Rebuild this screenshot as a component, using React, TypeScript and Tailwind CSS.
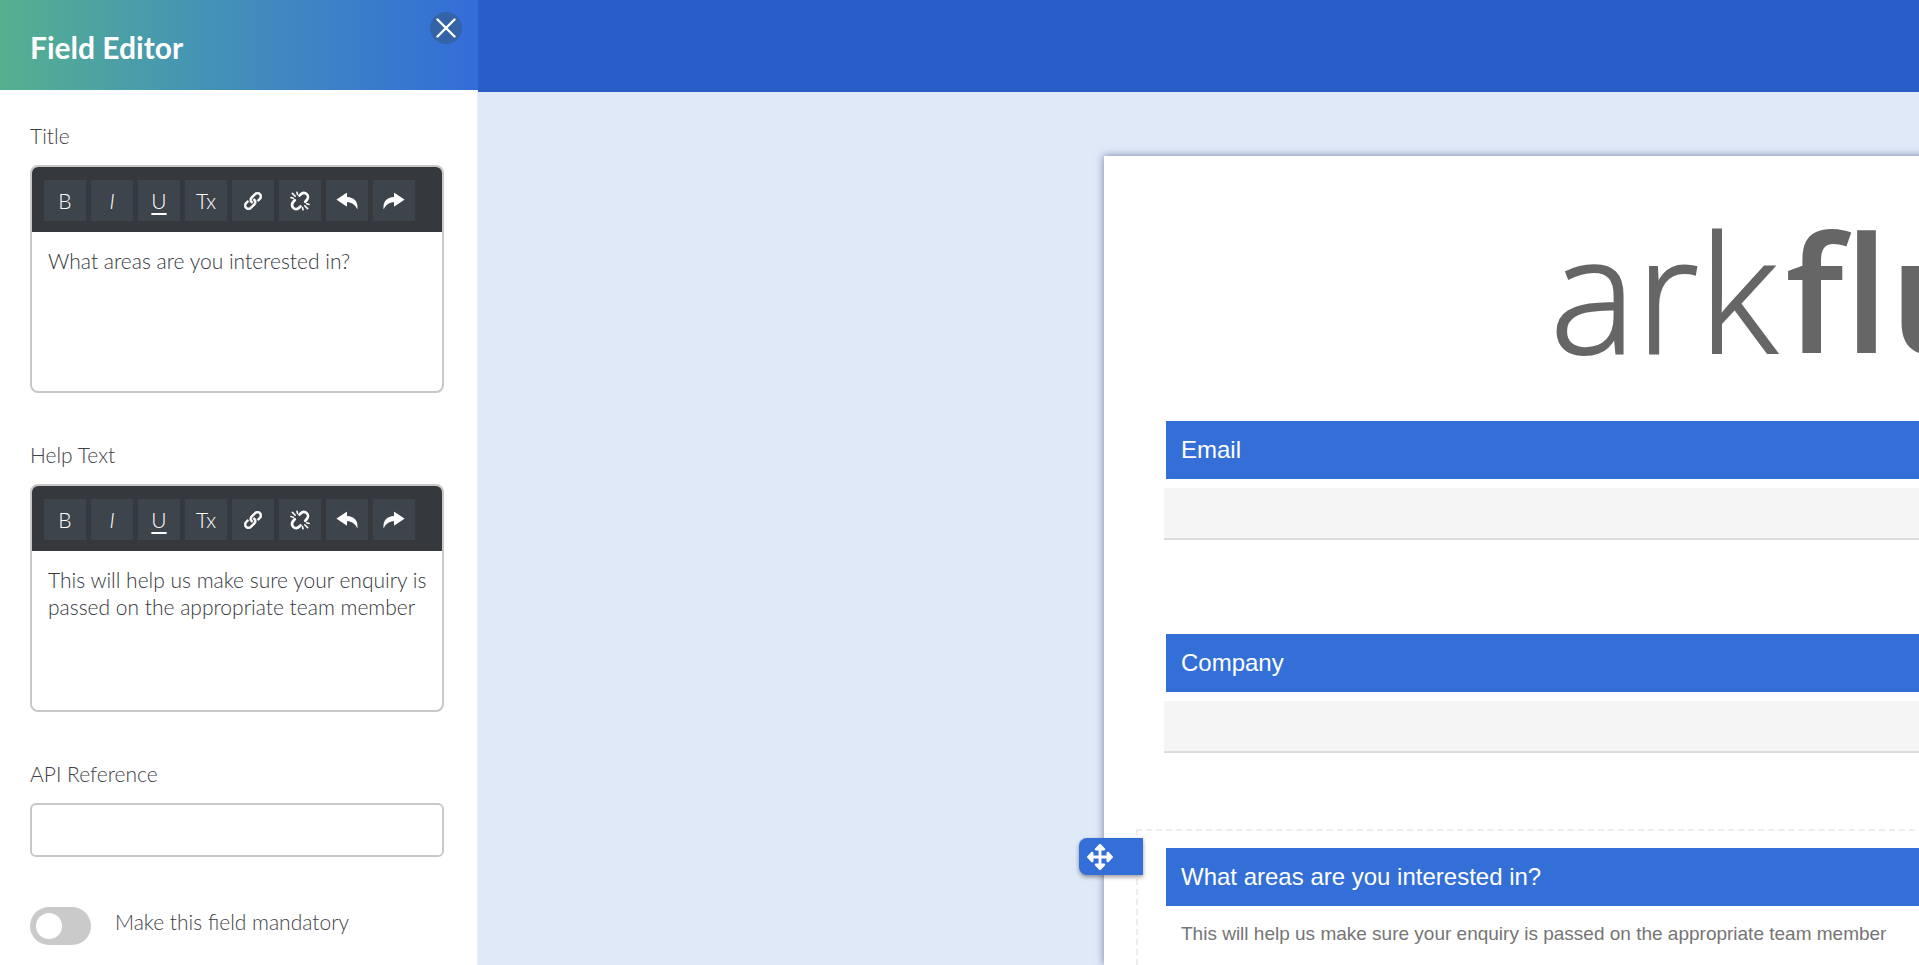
import type { ReactNode } from "react";
import { FaArrowsAlt } from "react-icons/fa";
import { ImLink } from "react-icons/im";
import { IoIosRedo, IoIosUndo } from "react-icons/io";

function UnlinkIcon() {
  return (
    <svg
      width="20"
      height="20"
      viewBox="0 0 20 20"
      fill="none"
      stroke="currentColor"
      strokeLinecap="round"
      strokeLinejoin="round"
      aria-hidden="true"
    >
      <g strokeWidth="2.7">
        <path d="M9.5 4.6l1.4-1.4a4 4 0 0 1 5.9 5.8l-1.6 1.8" />
        <path d="M10.5 15.4l-1.4 1.4a4 4 0 0 1-5.9-5.8l1.6-1.8" />
      </g>
      <g strokeWidth="1.6">
        <path d="M7 1.2l.5 2.2M2.4 2.4l2.8 2.8M.9 6.6l2.4.7" />
        <path d="M13 18.8l-.5-2.2M17.6 17.6l-2.8-2.8M19.1 13.4l-2.4-.7" />
      </g>
    </svg>
  );
}

const tools: { label: string; icon: ReactNode }[] = [
  { label: "Bold", icon: "B" },
  { label: "Italic", icon: <span className="italic">I</span> },
  { label: "Underline", icon: <span className="underline underline-offset-4">U</span> },
  { label: "Clear formatting", icon: "Tx" },
  { label: "Insert link", icon: <ImLink size={18} stroke="currentColor" strokeWidth="0.7" /> },
  { label: "Remove link", icon: <UnlinkIcon /> },
  { label: "Undo", icon: <IoIosUndo size={24} /> },
  { label: "Redo", icon: <IoIosRedo size={24} /> },
];

function RichTextField({ id, label, value }: { id: string; label: string; value: string }) {
  return (
    <div className="flex flex-col gap-[15px]">
      <label htmlFor={id} className="leading-7">
        {label}
      </label>
      <div className="flex h-[228px] flex-col overflow-hidden rounded-lg border-2 border-[#c8c8c8]">
        <div role="toolbar" aria-label={label} className="flex gap-[5px] bg-[#35383c] px-3 pt-[13px] pb-[11px]">
          {tools.map((tool) => (
            <button
              key={tool.label}
              type="button"
              aria-label={tool.label}
              className="flex h-[41px] w-[42px] items-center justify-center bg-[#3d444b] text-white"
            >
              {tool.icon}
            </button>
          ))}
        </div>
        <textarea
          id={id}
          defaultValue={value}
          className="w-full flex-1 resize-none py-[15px] pr-2 pl-4 leading-[27px] text-[#35383c] outline-none"
        />
      </div>
    </div>
  );
}

function Sidebar() {
  return (
    <aside className="flex w-[478px] shrink-0 flex-col bg-white font-['Lato',sans-serif] text-[21px] font-light text-[#3f4247]">
      <header className="flex h-[90px] shrink-0 items-start justify-between bg-linear-to-r/srgb from-[#55b08f] via-[#4595b4] via-40% to-[#336dd9] pr-4 pl-[30px]">
        <h1 className="pt-[29px] text-3xl font-bold text-white">Field Editor</h1>
        <button
          type="button"
          aria-label="Close"
          className="mt-3 flex size-8 items-center justify-center rounded-full bg-[#3563a8] text-white"
        >
          <svg width="20" height="20" viewBox="0 0 20 20" stroke="currentColor" strokeWidth="2.4" strokeLinecap="round" aria-hidden="true">
            <path d="M1.5 1.5l17 17M18.5 1.5l-17 17" />
          </svg>
        </button>
      </header>
      <form className="flex flex-1 flex-col gap-12 border-r border-[#ebeef2] pt-8 pr-[33px] pl-[30px]">
        <RichTextField id="title" label="Title" value="What areas are you interested in?" />
        <RichTextField
          id="help"
          label="Help Text"
          value="This will help us make sure your enquiry is passed on the appropriate team member"
        />
        <div className="flex flex-col gap-[15px]">
          <label htmlFor="api" className="leading-7">
            API Reference
          </label>
          <input id="api" type="text" className="h-[54px] rounded-md border-2 border-[#c8c8c8] px-4 outline-none" />
        </div>
        <div className="flex items-center gap-6 pt-[2px]">
          <input
            id="mandatory"
            type="checkbox"
            className="flex h-[38px] w-[61px] appearance-none items-center rounded-full bg-[#cacaca] px-[6px] before:size-[26px] before:rounded-full before:bg-white checked:justify-end checked:bg-[#336dd9]"
          />
          <label htmlFor="mandatory" className="pb-2 leading-7">
            Make this field mandatory
          </label>
        </div>
      </form>
    </aside>
  );
}

function FormField({ id, label }: { id: string; label: string }) {
  return (
    <div className="flex flex-col gap-[9px]">
      <label htmlFor={id} className="ml-[2px] bg-[#346fd8] px-[15px] py-[15px] text-2xl leading-7 text-white">
        {label}
      </label>
      <input id={id} type="text" className="h-[52px] border-b-2 border-[#dcdcdc] bg-[#f5f5f5] px-4 outline-none" />
    </div>
  );
}

export default function App() {
  return (
    <div className="flex h-screen overflow-hidden bg-[#e0e9f8]">
      <Sidebar />
      <div className="flex min-w-0 flex-1 flex-col">
        <div className="h-[92px] shrink-0 bg-[#295dc7]" />
        <main className="flex min-h-0 flex-1 pt-16 pl-[626px] font-['Liberation_Sans',Arial,sans-serif]">
          <section className="-mr-4 flex min-w-0 flex-1 flex-col bg-white shadow-[0_0_8px_rgba(40,60,100,0.6)]">
            <div className="flex h-[265px] gap-2 overflow-hidden pt-[34px] pl-[446px] font-['Open_Sans',sans-serif] text-[162px] leading-[200px] whitespace-nowrap text-[#666666]">
              <span className="font-light [-webkit-text-stroke:2px_#666666]">ark</span>
              <span className="font-semibold">flu</span>
            </div>
            <div className="flex flex-col gap-[94px] pl-[60px]">
              <FormField id="email" label="Email" />
              <FormField id="company" label="Company" />
            </div>
            <div className="relative mt-[76px] ml-8 flex-1 border-t-2 border-l-2 border-dashed border-[#ededed] pt-[17px] pl-7">
              <button
                type="button"
                aria-label="Move field"
                className="absolute top-[7px] -left-[59px] flex h-[37px] w-16 items-center rounded-l-lg bg-[#346fd8] pl-2 text-white shadow-[0_2px_4px_rgba(0,0,0,0.4)]"
              >
                <FaArrowsAlt size={26} />
              </button>
              <h2 className="bg-[#346fd8] px-[15px] py-[15px] text-2xl leading-7 text-white">
                What areas are you interested in?
              </h2>
              <p className="px-[15px] pt-3 text-[19px] leading-8 whitespace-nowrap text-[#757575]">
                This will help us make sure your enquiry is passed on the appropriate team member
              </p>
            </div>
          </section>
        </main>
      </div>
    </div>
  );
}
